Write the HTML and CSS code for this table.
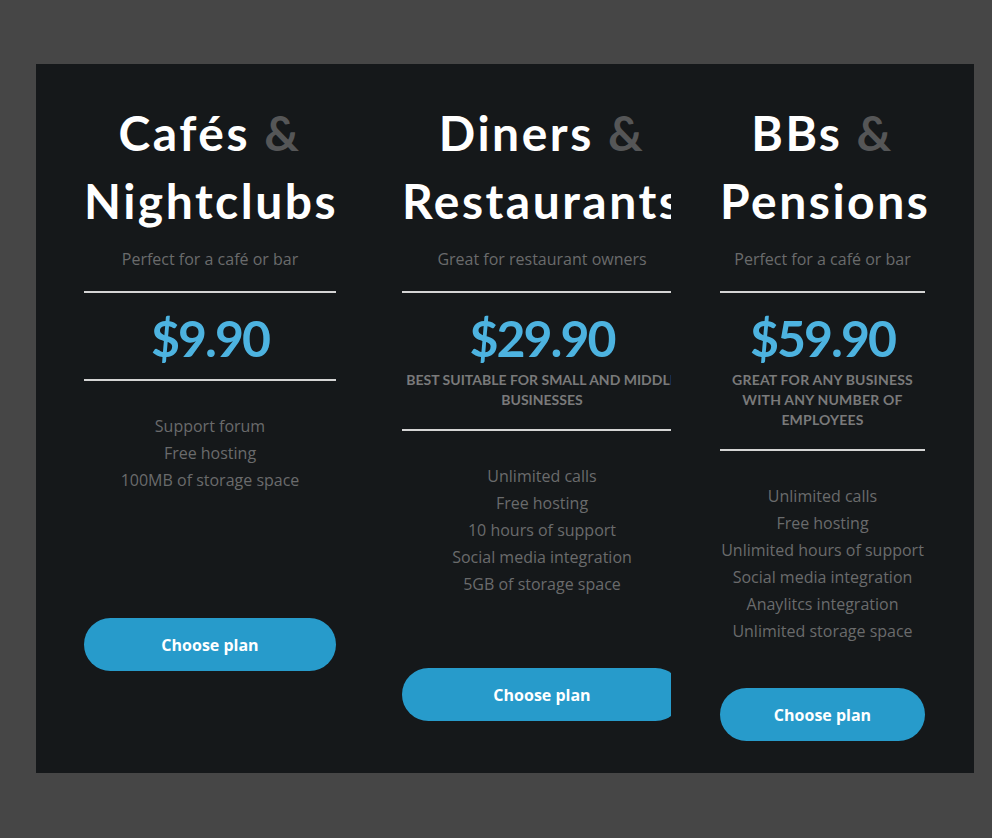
FILE: index.html
```html
<!DOCTYPE html>
<html lang="en">
<head>
<meta charset="utf-8">
<title>Pricing</title>
<link rel="stylesheet" href="styles.css">
</head>
<body>
<section class="panel">
  <div class="plan plan-a">
    <div class="plan-inner">
      <h2 class="title">Cafés <span class="amp">&amp;</span><br>Nightclubs</h2>
      <p class="subtitle">Perfect for a café or bar</p>
      <hr class="rule">
      <div class="price">$9.90</div>
      <hr class="rule rule-tight">
      <ul class="features">
        <li>Support forum</li>
        <li>Free hosting</li>
        <li>100MB of storage space</li>
      </ul>
      <a class="btn" href="#">Choose plan</a>
    </div>
  </div>
  <div class="plan plan-b">
    <div class="plan-inner">
      <h2 class="title">Diners <span class="amp">&amp;</span><br>Restaurants</h2>
      <p class="subtitle">Great for restaurant owners</p>
      <hr class="rule">
      <div class="price">$29.90</div>
      <p class="tagline">Best suitable for small and middle businesses</p>
      <hr class="rule">
      <ul class="features">
        <li>Unlimited calls</li>
        <li>Free hosting</li>
        <li>10 hours of support</li>
        <li>Social media integration</li>
        <li>5GB of storage space</li>
      </ul>
      <a class="btn" href="#">Choose plan</a>
    </div>
  </div>
  <div class="plan plan-c">
    <div class="plan-inner">
      <h2 class="title">BBs <span class="amp">&amp;</span><br>Pensions</h2>
      <p class="subtitle">Perfect for a café or bar</p>
      <hr class="rule">
      <div class="price">$59.90</div>
      <p class="tagline">Great for any business with any number of employees</p>
      <hr class="rule">
      <ul class="features">
        <li>Unlimited calls</li>
        <li>Free hosting</li>
        <li>Unlimited hours of support</li>
        <li>Social media integration</li>
        <li>Anaylitcs integration</li>
        <li>Unlimited storage space</li>
      </ul>
      <a class="btn" href="#">Choose plan</a>
    </div>
  </div>
</section>
</body>
</html>
```

FILE: styles.css
```css
html, body {
  margin: 0;
  padding: 0;
}
body {
  background: #464646;
  font-family: "Open Sans", "Liberation Sans", sans-serif;
  height: 838px;
  overflow: hidden;
}
.panel {
  box-sizing: border-box;
  margin: 64px 0 0 36px;
  width: 938px;
  height: 709px;
  background: #15181a;
  display: flex;
  align-items: flex-start;
  padding: 35px 0 0 48px;
}
.plan {
  text-align: center;
  flex: none;
}
.plan-a { width: 252px; }
.plan-b { width: 269px; margin-left: 66px; overflow: hidden; }
.plan-b .plan-inner { width: 280px; }
.plan-c { width: 205px; margin-left: 49px; }

.title {
  margin: 0;
  font-family: "Lato", "Liberation Sans", sans-serif;
  font-weight: 700;
  font-size: 48px;
  line-height: 68px;
  color: #ffffff;
  white-space: nowrap;
  letter-spacing: 2.5px;
}
.amp { color: #555657; }
.subtitle {
  margin: 12px 0 0;
  font-size: 16px;
  line-height: 24px;
  color: #6a6b6c;
}
.rule {
  margin: 20px 0 0;
  border: 0;
  height: 2px;
  background: #d4d4d4;
}
.price {
  margin-top: 15px;
  font-family: "Lato", "Liberation Sans", sans-serif;
  font-weight: 700;
  font-size: 50px;
  line-height: 60px;
  color: #4db3e0;
  letter-spacing: -2px;
}
.rule-tight { margin-top: 11px; }
.tagline {
  margin: 2px 0 0;
  font-family: "Lato", "Liberation Sans", sans-serif;
  font-weight: 700;
  font-size: 14px;
  line-height: 20px;
  text-transform: uppercase;
  color: #7a7a7a;
  letter-spacing: 0.2px;
}
.plan-b .tagline { letter-spacing: 0; }
.tagline + .rule { margin-top: 19px; }
.features {
  list-style: none;
  margin: 32px 0 43px;
  padding: 0;
  min-height: 162px;
  font-size: 16px;
  line-height: 27px;
  color: #6a6b6c;
}
.btn {
  display: flex;
  align-items: center;
  justify-content: center;
  height: 53px;
  border-radius: 27px;
  background: #279bcb;
  color: #ffffff;
  font-weight: 700;
  font-size: 16px;
  text-decoration: none;
}
```
